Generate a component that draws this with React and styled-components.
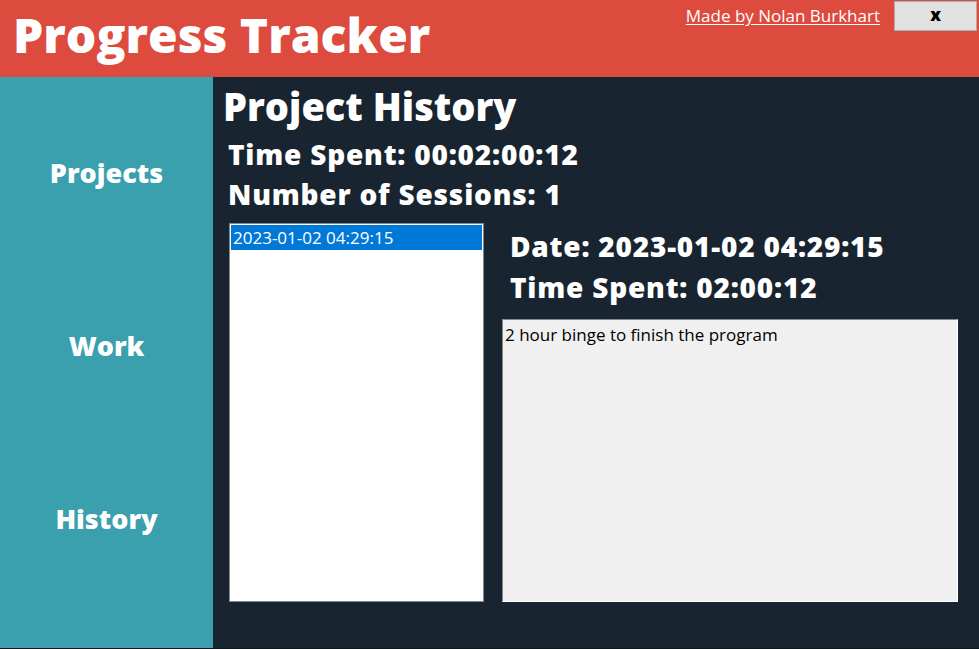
import React from "react";
import styled, { createGlobalStyle } from "styled-components";

const Global = createGlobalStyle`
  html, body { margin: 0; padding: 0; background: #18242f; }
  body { font-family: "Open Sans", "Noto Sans", sans-serif; }
  * { box-sizing: border-box; }
`;

const Shell = styled.div`
  width: 979px;
  height: 649px;
  display: grid;
  grid-template-rows: 77px 1fr;
  grid-template-columns: 213px 1fr;
  overflow: hidden;
  border-bottom: 1px solid #0f171f;
`;

const Header = styled.header`
  grid-column: 1 / 3;
  background: #dd4a3e;
  display: flex;
  justify-content: space-between;
  align-items: flex-start;
`;

const AppTitle = styled.h1`
  margin: 0;
  padding: 3px 0 0 13px;
  font-family: "Open Sans", sans-serif;
  font-weight: 800;
  font-size: 48px;
  line-height: 64px;
  color: #fff;
`;

const HeaderRight = styled.div`
  display: flex;
  align-items: flex-start;
  gap: 14px;
  padding-top: 1px;
  padding-right: 2px;
`;

const Credit = styled.a`
  font-family: "Open Sans", sans-serif;
  font-size: 17px;
  line-height: 20px;
  margin-top: 5px;
  color: #fff;
  text-decoration: underline;
  text-underline-offset: 2px;
`;

const CloseButton = styled.button`
  width: 83px;
  height: 30px;
  background: #e1e1e1;
  border: 1px solid #adadad;
  font-family: "Open Sans", sans-serif;
  font-weight: 800;
  font-size: 17px;
  color: #000;
  padding: 0 0 4px;
`;

const Sidebar = styled.nav`
  background: #3aa0ae;
  display: flex;
  flex-direction: column;
  align-items: center;
  gap: 133px;
  padding-top: 76px;
`;

const NavItem = styled.div`
  font-family: "Open Sans", sans-serif;
  font-weight: 800;
  font-size: 27px;
  line-height: 40px;
  color: #fff;
`;

const Main = styled.main`
  background: #18242f;
  padding: 6px 0 0 10px;
  display: flex;
  flex-direction: column;
`;

const PageTitle = styled.h2`
  margin: 0;
  font-family: "Open Sans", sans-serif;
  font-weight: 800;
  font-size: 38px;
  line-height: 46px;
  color: #fff;
`;

const Stats = styled.div`
  margin-top: 5px;
  display: flex;
  flex-direction: column;
`;

const Stat = styled.div`
  font-family: "Open Sans", sans-serif;
  font-weight: 800;
  font-size: 28px;
  letter-spacing: 0.8px;
  line-height: ${(p) => p.$lh || 40}px;
  color: #fff;
  padding-left: ${(p) => p.$indent || 5}px;
`;

const Body = styled.div`
  display: flex;
  gap: 18px;
  margin-top: 9px;
  padding-left: 6px;
`;

const ListBox = styled.ul`
  margin: 0;
  padding: 1px;
  list-style: none;
  width: 255px;
  height: 379px;
  background: #fff;
  border: 1px solid #828790;
`;

const ListItem = styled.li`
  font-family: "Open Sans", sans-serif;
  font-size: 17px;
  line-height: 25px;
  padding-left: 2px;
  color: ${(p) => (p.$selected ? "#fff" : "#000")};
  background: ${(p) => (p.$selected ? "#0078d7" : "transparent")};
`;

const Details = styled.div`
  display: flex;
  flex-direction: column;
  flex: 1;
  padding-top: 3px;
`;

const NoteBox = styled.div`
  margin-top: 11px;
  width: 456px;
  height: 283px;
  background: #f0f0f0;
  border-top: 1px solid #8a8a8a;
  border-left: 1px solid #8a8a8a;
  border-right: 1px solid #fff;
  border-bottom: 1px solid #fff;
  font-family: "Open Sans", sans-serif;
  font-size: 17px;
  line-height: 30px;
  padding-left: 2px;
  color: #000;
`;

export default function App() {
  return (
    <>
      <Global />
      <Shell>
        <Header>
          <AppTitle>Progress Tracker</AppTitle>
          <HeaderRight>
            <Credit href="#">Made by Nolan Burkhart</Credit>
            <CloseButton>x</CloseButton>
          </HeaderRight>
        </Header>
        <Sidebar>
          <NavItem>Projects</NavItem>
          <NavItem>Work</NavItem>
          <NavItem>History</NavItem>
        </Sidebar>
        <Main>
          <PageTitle>Project History</PageTitle>
          <Stats>
            <Stat>Time Spent: 00:02:00:12</Stat>
            <Stat>Number of Sessions: 1</Stat>
          </Stats>
          <Body>
            <ListBox>
              <ListItem $selected>2023-01-02 04:29:15</ListItem>
            </ListBox>
            <Details>
              <Stat $indent={8} $lh={41}>Date: 2023-01-02 04:29:15</Stat>
              <Stat $indent={8} $lh={41}>Time Spent: 02:00:12</Stat>
              <NoteBox>2 hour binge to finish the program</NoteBox>
            </Details>
          </Body>
        </Main>
      </Shell>
    </>
  );
}
